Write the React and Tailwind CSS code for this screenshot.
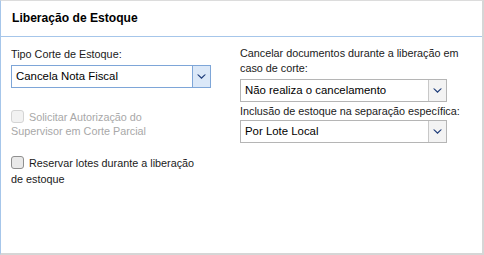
import React, { useState } from 'react';

function Chevron() {
    return (
        <svg width="9" height="6" viewBox="0 0 9 6">
            <path d="M0 0.5 L4.5 5 L9 0.5 L7.5 0.5 L4.5 3.2 L1.5 0.5 Z" fill="#1f3d7a" />
        </svg>
    );
}

function Select({ value, focused }) {
    return (
        <div
            className={`flex h-[23px] items-stretch border bg-white ${focused ? 'border-[#7ea6d8]' : 'border-[#b5b5b5]'}`}
        >
            <div className="flex flex-1 items-center px-[4px] text-[11.4px] text-black">{value}</div>
            <div
                className={`flex w-[18px] items-center justify-center border-l ${focused ? 'border-[#7ea6d8] bg-[#dbe8f8]' : 'border-[#c8c8c8] bg-[#f3f3f3]'}`}
            >
                <Chevron />
            </div>
        </div>
    );
}

function Checkbox({ checked, disabled, onChange }) {
    return (
        <span
            onClick={disabled ? undefined : onChange}
            className={`mr-[5px] inline-block h-[13px] w-[13px] translate-y-[2px] rounded-[3px] border align-baseline ${disabled ? 'border-[#d4d4d4] bg-[#f2f2f2]' : 'border-[#8f8f8f] bg-[#e9e9e9]'}`}
        >
            {checked && <span className="block text-center text-[10px] leading-[11px]">✓</span>}
        </span>
    );
}

export default function App() {
    const [reservar, setReservar] = useState(false);

    return (
        <div className="h-[255px] w-[484px] bg-white font-['Liberation_Sans',sans-serif] text-[10.8px] text-[#1a1a1a]">
            <div className="flex h-full flex-col border-t border-r-2 border-b-2 border-l border-t-[#dcdcdc] border-r-[#d6d6d6] border-b-[#d6d6d6] border-l-[#a6c6ea]">
                {/* Header */}
                <div className="flex h-[36px] items-center border-b border-[#a6c6ea] px-[11px]">
                    <h1 className="text-[12.1px] font-bold text-black">Liberação de Estoque</h1>
                </div>

                {/* Body */}
                <div className="grid grid-cols-[200px_232px] gap-x-[29px] px-[10px] pt-[9px]">
                    <div>
                        <label className="block leading-[16px]">Tipo Corte de Estoque:</label>
                        <div className="mt-[3px]">
                            <Select value="Cancela Nota Fiscal" focused />
                        </div>

                        <div className="mt-[20px] w-[180px] leading-[14px] text-[#a8a8a8]">
                            <Checkbox disabled />
                            Solicitar Autorização do Supervisor em Corte Parcial
                        </div>

                        <div className="mt-[16px] w-[196px] leading-[16px]">
                            <Checkbox checked={reservar} onChange={() => setReservar(!reservar)} />
                            Reservar lotes durante a liberação de estoque
                        </div>
                    </div>

                    <div>
                        <label className="block leading-[15px]">Cancelar documentos durante a liberação em caso de corte:</label>
                        <div className="mt-[3px] w-[207px]">
                            <Select value="Não realiza o cancelamento" />
                        </div>
                        <label className="mt-[2px] block leading-[15px]">Inclusão de estoque na separação específica:</label>
                        <div className="mt-[1px] w-[207px]">
                            <Select value="Por Lote Local" />
                        </div>
                    </div>
                </div>
            </div>
        </div>
    );
}
